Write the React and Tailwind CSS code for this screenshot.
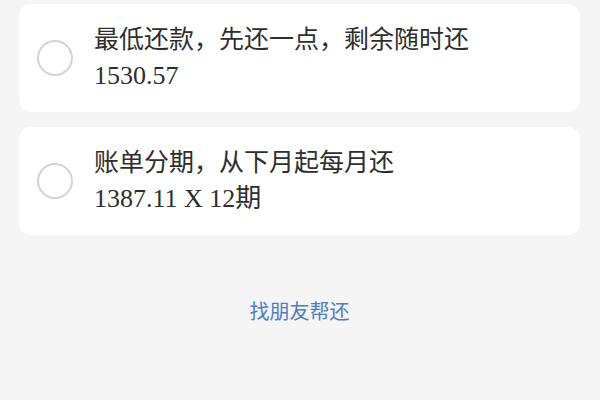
const options = [
  { title: "最低还款，先还一点，剩余随时还", amount: "1530.57" },
  { title: "账单分期，从下月起每月还", amount: "1387.11 X 12期" },
];

function OptionCard({ title, amount }) {
  return (
    <div className="flex h-[108px] items-center rounded-[12px] bg-white pl-[18px]">
      <span className="h-[36px] w-[36px] shrink-0 rounded-full border-2 border-[#d4d4d4]" />
      <div className="ml-[21px] text-[25px] leading-[36px] text-[#2e2e2e]">
        <p>{title}</p>
        <p className="text-[26px]">{amount}</p>
      </div>
    </div>
  );
}

export default function App() {
  return (
    <div
      className="flex h-[400px] w-[600px] flex-col bg-[#f5f5f5] pt-[4px] pl-[19px] pr-[20px]"
      style={{ fontFamily: '"Liberation Serif", "Noto Sans CJK SC", serif' }}
    >
      <div className="flex flex-col gap-[15px]">
        {options.map((o) => (
          <OptionCard key={o.title} {...o} />
        ))}
      </div>
      <p
        className="mt-[62px] text-center text-[20px] leading-[28px] text-[#4f7cc4]"
        style={{ fontFamily: '"Noto Sans CJK SC", sans-serif' }}
      >
        找朋友帮还
      </p>
    </div>
  );
}
